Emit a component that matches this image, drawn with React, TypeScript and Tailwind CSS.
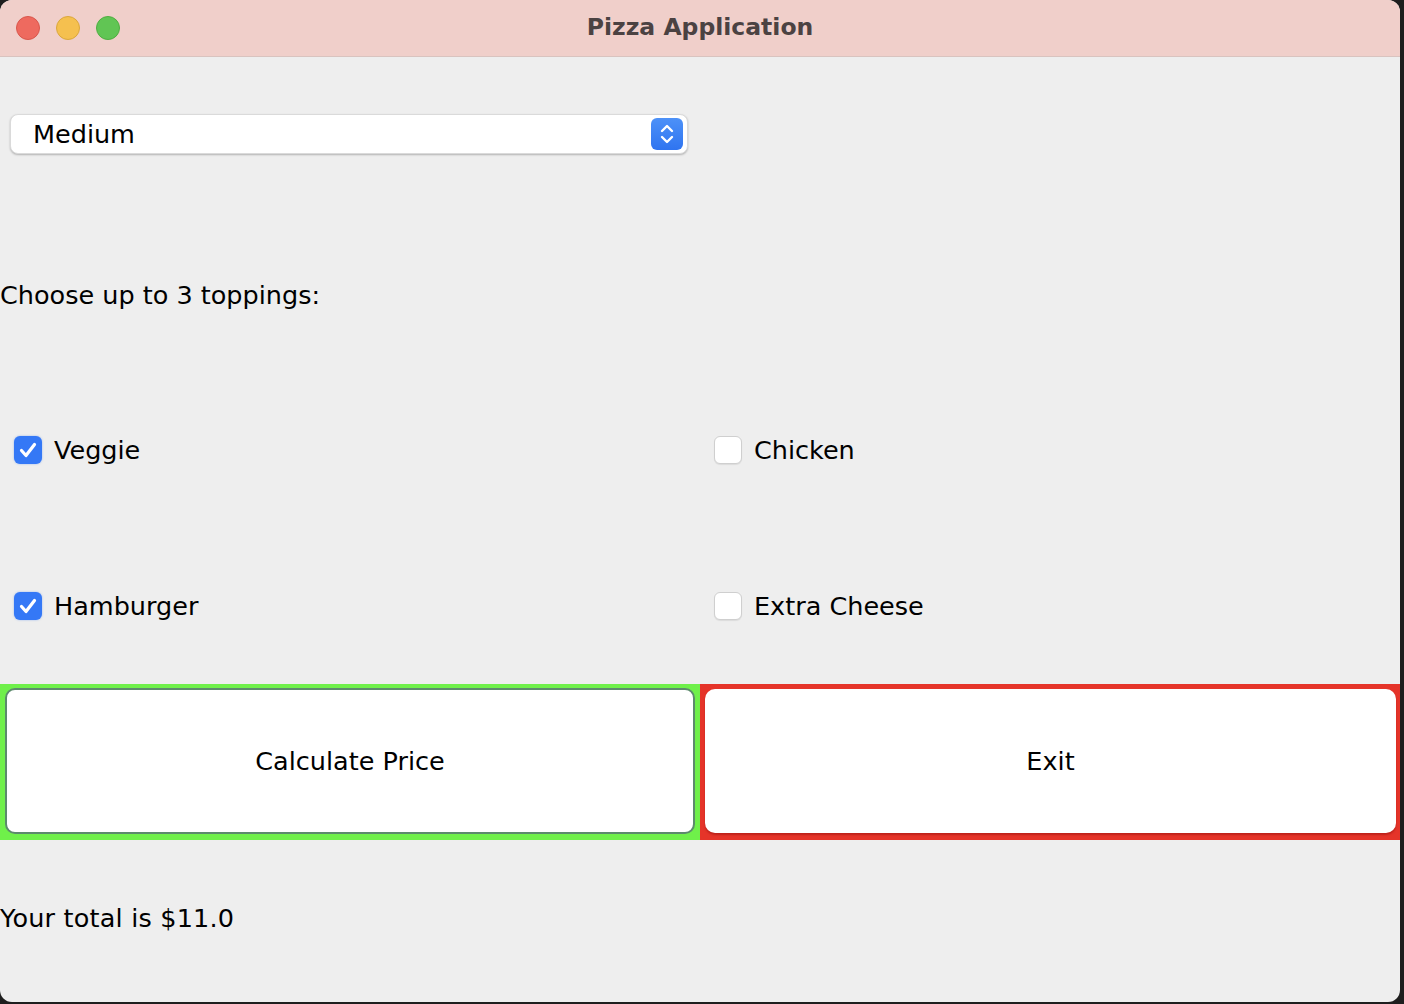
const font = "font-['DejaVu_Sans','Liberation_Sans',sans-serif]";

function TrafficLights() {
  return (
    <div className="flex items-center gap-4 pl-4">
      <span className="h-6 w-6 rounded-full border border-[#d9574c] bg-[#ee6a5f]" />
      <span className="h-6 w-6 rounded-full border border-[#dba73c] bg-[#f5c04f]" />
      <span className="h-6 w-6 rounded-full border border-[#4fae41] bg-[#61c554]" />
    </div>
  );
}

function Checkbox({ checked, label }: { checked: boolean; label: string }) {
  return (
    <div className="flex items-center gap-3 pl-[14px]">
      {checked ? (
        <span className="flex h-7 w-7 items-center justify-center rounded-[6px] bg-[#3478f6] shadow-[0_0_2px_rgba(52,120,246,0.5)]">
          <svg width="24" height="24" viewBox="0 0 24 24" fill="none">
            <path d="M5.5 12.5l4.5 5 8.5-11" stroke="white" strokeWidth="3.2" strokeLinecap="round" strokeLinejoin="round" />
          </svg>
        </span>
      ) : (
        <span className="h-7 w-7 rounded-[6px] border border-[#cfcfcf] bg-white shadow-[0_1px_1px_rgba(0,0,0,0.08)]" />
      )}
      <span className="text-[25.5px] leading-[30px] text-black">{label}</span>
    </div>
  );
}

export default function App() {
  return (
    <div className={`h-[1004px] w-[1404px] bg-[#1e1e1e] ${font}`}>
      <div className="flex h-[1002px] w-[1400px] flex-col overflow-hidden rounded-[12px] bg-[#eeeeee]">
        <div className="relative flex h-[57px] shrink-0 items-center border-b border-[#d9c3bf] bg-[#f0cfca]">
          <TrafficLights />
          <div className="absolute inset-x-0 top-0 flex h-[56px] items-center justify-center text-[23.5px] font-bold text-[#4b4242]">
            Pizza Application
          </div>
        </div>

        <div className="flex h-[157px] items-center pb-1 pl-[10px]">
          <div className="flex h-10 w-[678px] items-center justify-between rounded-[8px] border border-[#dadada] bg-white pl-[22px] pr-1 shadow-[0_1px_2px_rgba(0,0,0,0.25)]">
            <span className="text-[25.5px] leading-[30px] text-black">Medium</span>
            <span className="flex h-8 w-8 items-center justify-center rounded-[6px] bg-gradient-to-b from-[#4d91f8] to-[#2f74f0]">
              <svg width="18" height="24" viewBox="0 0 18 24" fill="none">
                <path d="M4 9l5-5 5 5M4 15l5 5 5-5" stroke="white" strokeWidth="2.4" strokeLinecap="round" strokeLinejoin="round" />
              </svg>
            </span>
          </div>
        </div>

        <div className="flex h-[158px] items-center pt-1">
          <span className="text-[25.5px] leading-[30px] text-black">Choose up to 3 toppings:</span>
        </div>

        <div className="grid h-[156px] grid-cols-2 items-center">
          <Checkbox checked label="Veggie" />
          <Checkbox checked={false} label="Chicken" />
        </div>

        <div className="grid h-[156px] grid-cols-2 items-center">
          <Checkbox checked label="Hamburger" />
          <Checkbox checked={false} label="Extra Cheese" />
        </div>

        <div className="grid h-[156px] grid-cols-2">
          <div className="bg-[#6ff04a] pb-[6px] pl-[5px] pr-[5px] pt-[4px]">
            <button className="flex h-full w-full items-center justify-center rounded-[10px] border-2 border-[#5c8a6c] bg-white text-[25.5px] text-black">
              Calculate Price
            </button>
          </div>
          <div className="bg-[#e53429] pb-[7px] pl-[5px] pr-[4px] pt-[5px]">
            <button className="flex h-full w-full items-center justify-center rounded-[10px] bg-white text-[25.5px] text-black shadow-[0_2px_2px_rgba(120,0,0,0.35)]">
              Exit
            </button>
          </div>
        </div>

        <div className="flex-1 pt-[63px]">
          <span className="text-[25.5px] leading-[30px] tracking-[0.2px] text-black">Your total is $11.0</span>
        </div>
      </div>
    </div>
  );
}
